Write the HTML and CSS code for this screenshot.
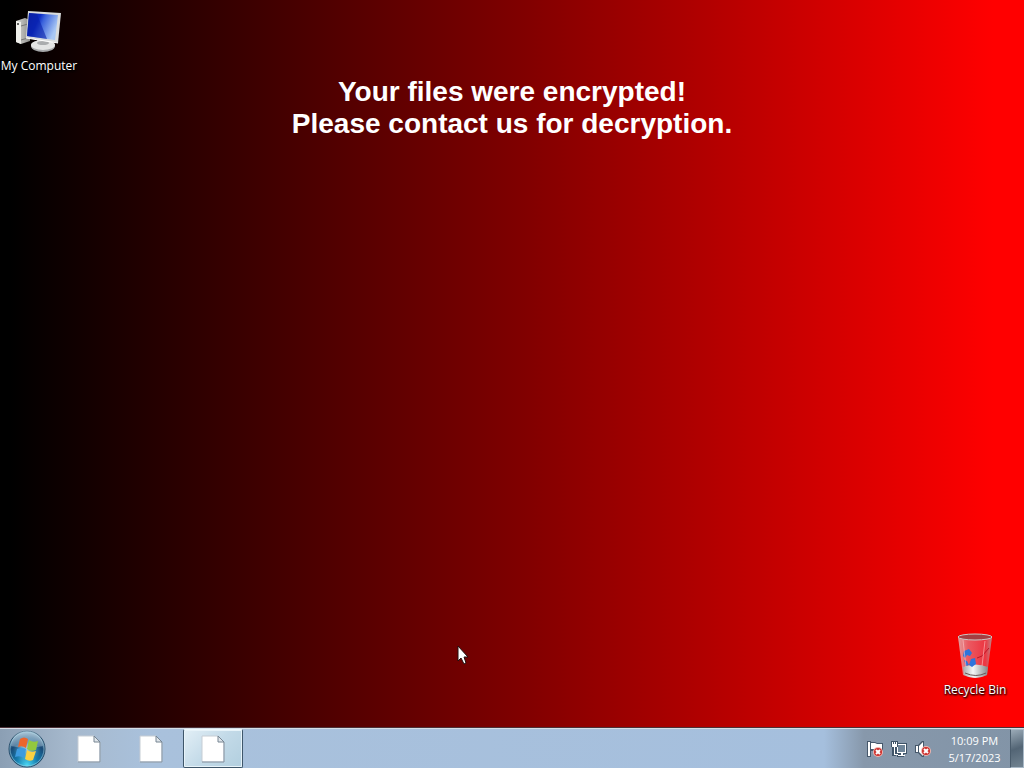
FILE: index.html
```
<!DOCTYPE html>
<html lang="en">
<head>
  <meta charset="UTF-8" />
  <meta name="viewport" content="width=device-width, initial-scale=1.0"/>
  <title>Desktop</title>
  <link rel="stylesheet" href="styles.css">
</head>
<body>
  <main class="desktop">
    <a class="shortcut computer" href="#computer">
      <svg width="48" height="48" viewBox="0 0 48 48" aria-hidden="true">
        <defs>
          <linearGradient id="screen" x1="0" y1="0" x2="1" y2="0.4">
            <stop offset="0" stop-color="#0a1f9c"/>
            <stop offset="0.4" stop-color="#0c2cc4"/>
            <stop offset="0.55" stop-color="#3a62dc"/>
            <stop offset="1" stop-color="#a9c8f4"/>
          </linearGradient>
          <linearGradient id="tower" x1="0" y1="0" x2="1" y2="0">
            <stop offset="0" stop-color="#d8d8d4"/>
            <stop offset="1" stop-color="#8d8d8b"/>
          </linearGradient>
        </defs>
        <path d="M1 13l9-3 5 2v21l-9 3-5-2z" fill="url(#tower)"/>
        <path d="M1 13l5 1v22l-5-2z" fill="#efefeb"/>
        <circle cx="3" cy="16" r="1" fill="#333"/>
        <path d="M6 18l7-2M6 32l7-2" stroke="#777" fill="none"/>
        <path d="M22 31l9 2v6h-9z" fill="#a5a7a8"/>
        <ellipse cx="28" cy="38" rx="12" ry="6" fill="#a6a8aa"/>
        <ellipse cx="28" cy="37" rx="12" ry="5" fill="#e3e4e4"/>
        <ellipse cx="28" cy="35" rx="6" ry="2" fill="#aaacae"/>
        <path d="M13 3l33 2-3 30-32-5z" fill="#d9dcdd"/>
        <path d="M14 5l29 2-3 25-28-4z" fill="url(#screen)"/>
        <path d="M14 5l8 1 10 25-20-3z" fill="#0820a8" opacity="0.6"/>
        <path d="M11 30l32 5" stroke="#fff"/>
      </svg>
      <span>My Computer</span>
    </a>

    <h1>Your files were encrypted!<br>Please contact us for decryption.</h1>

    <a class="shortcut bin" href="#bin">
      <svg width="48" height="48" viewBox="0 0 48 48" aria-hidden="true">
        <defs>
          <linearGradient id="glass" x1="0" y1="0" x2="1" y2="0">
            <stop offset="0" stop-color="#e0b0b0" stop-opacity="0.9"/>
            <stop offset="0.3" stop-color="#e8707a" stop-opacity="0.8"/>
            <stop offset="0.8" stop-color="#e84452" stop-opacity="0.8"/>
            <stop offset="1" stop-color="#b98a8a"/>
          </linearGradient>
          <linearGradient id="base" x1="0" y1="0" x2="1" y2="0">
            <stop offset="0" stop-color="#a7aaaa"/>
            <stop offset="0.4" stop-color="#f4f6f6"/>
            <stop offset="1" stop-color="#858888"/>
          </linearGradient>
        </defs>
        <path d="M7 5h34l-5 38q-12 6-24 0z" fill="url(#glass)"/>
        <path d="M12 35q12-5 25 0l-1 8q-12 6-23 0z" fill="url(#base)"/>
        <path d="M14 41q11 5 21 0" stroke="#6b5656" fill="none"/>
        <path d="M13 19l5-2 3 4-2 3-3-1-2 3-2-2zM20 27l4-1 1 6-4 3-3-2zM13 28l3 1 2 4-3 1z" fill="#2d74dc"/>
        <path d="M38 16l-7 8-5 2" stroke="#ba1727" fill="none"/>
        <path d="M12 8l3 27M34 9l-3 25" stroke="#ffc5c5" opacity="0.6"/>
        <ellipse cx="24" cy="5" rx="17" ry="3" fill="#a43e42" stroke="#ccc6c3"/>
      </svg>
      <span>Recycle Bin</span>
    </a>

    <svg class="pointer" width="12" height="20" viewBox="0 0 12 20" aria-hidden="true">
      <path d="M1 1v15l3-3 3 6 2-1-2-6h4z" fill="#fff" stroke="#201010"/>
    </svg>
  </main>

  <footer class="taskbar">
    <button class="start" type="button" aria-label="Start">
      <svg width="38" height="38" viewBox="0 0 38 38" aria-hidden="true">
        <defs>
          <radialGradient id="orb" cx="0.5" cy="0.95" r="0.9">
            <stop offset="0" stop-color="#4ad8f4"/>
            <stop offset="0.35" stop-color="#147aac"/>
            <stop offset="0.7" stop-color="#1a4a76"/>
            <stop offset="1" stop-color="#8fb0c6"/>
          </radialGradient>
          <radialGradient id="glow">
            <stop offset="0" stop-color="#dff6ff" stop-opacity="0.7"/>
            <stop offset="1" stop-color="#6ab7dc" stop-opacity="0"/>
          </radialGradient>
        </defs>
        <circle cx="19" cy="19" r="18" fill="url(#orb)" stroke="#264c69"/>
        <circle cx="19" cy="19" r="17" fill="none" stroke="#9fd0e2" opacity="0.6"/>
        <path d="M3 16a16 16 0 0 1 32 0q-16 4-32 0z" fill="#c9dfea" opacity="0.35"/>
        <circle cx="19" cy="19" r="14" fill="url(#glow)"/>
        <path d="M12 9q4-3 8 0l-2 9q-4-3-8-1z" fill="#ec652c"/>
        <path d="M21 10q4 3 9 1l-2 9q-5 2-9-1z" fill="#93c83f"/>
        <path d="M9 19q4-2 9 0l-2 9q-4-3-9-1z" fill="#3d9be0"/>
        <path d="M19 20q4 3 9 1l-3 9q-4 2-8-1z" fill="#fbd043"/>
      </svg>
    </button>

    <nav class="tasks" aria-label="Programs">
      <button type="button" aria-label="Program 1">
        <svg width="26" height="30" viewBox="0 0 26 30"><path d="M2 2h16l6 6v20H2z" fill="#fff" stroke="#c6cdd4"/><path d="M24 8v20H2" fill="none" stroke="#8293a3"/><path d="M18 2v6h6z" fill="#dfe5ea" stroke="#778592"/></svg>
      </button>
      <button type="button" aria-label="Program 2">
        <svg width="26" height="30" viewBox="0 0 26 30"><path d="M2 2h16l6 6v20H2z" fill="#fff" stroke="#c6cdd4"/><path d="M24 8v20H2" fill="none" stroke="#8293a3"/><path d="M18 2v6h6z" fill="#dfe5ea" stroke="#778592"/></svg>
      </button>
      <button class="active" type="button" aria-label="Program 3">
        <svg width="26" height="30" viewBox="0 0 26 30"><path d="M2 2h16l6 6v20H2z" fill="#fff" stroke="#c6cdd4"/><path d="M24 8v20H2" fill="none" stroke="#8293a3"/><path d="M18 2v6h6z" fill="#dfe5ea" stroke="#778592"/></svg>
      </button>
    </nav>

    <div class="tray">
      <button type="button" aria-label="Action Center">
        <svg width="16" height="16" viewBox="0 0 16 16">
          <path d="M0 0h4v1h4l2 1h6v8H4v6H0z" fill="#46586b"/>
          <path d="M1 1h2v14H1zM4 2h4l2 1h5v6H9L8 8H4z" fill="#fff"/>
          <circle cx="11" cy="11" r="5" fill="#f0b4ae"/>
          <circle cx="11" cy="11" r="4" fill="#cc2f2c"/>
          <path d="M9 9l4 4M13 9l-4 4" stroke="#fff" stroke-width="2"/>
        </svg>
      </button>
      <button type="button" aria-label="Network">
        <svg width="16" height="16" viewBox="0 0 16 16">
          <path d="M5 2h11v11h-3v3H6v-3H5z" fill="#3f5468"/>
          <path d="M6 3h9v9H6z" fill="#fff"/>
          <path d="M7 4h7v7H7z" fill="#70869a"/>
          <path d="M10 12h2v2h2v1H7v-1h3z" fill="#fff"/>
          <path d="M0 0h7v6H5v9H1V6H0z" fill="#3f5468"/>
          <path d="M1 1h1v2h1V1h1v2h1V1h1v5H4v7h3v1H3V6H1z" fill="#fff"/>
        </svg>
      </button>
      <button type="button" aria-label="Volume">
        <svg width="16" height="16" viewBox="0 0 16 16">
          <path d="M0 4h3l4-4h2v16H7l-4-4H0z" fill="#46586b"/>
          <path d="M1 5h2v6H1zM4 5l4-4v14l-4-4z" fill="#fff"/>
          <circle cx="11" cy="10" r="5" fill="#f0b4ae"/>
          <circle cx="11" cy="10" r="4" fill="#cc2f2c"/>
          <path d="M9 8l4 4M13 8l-4 4" stroke="#fff" stroke-width="2"/>
        </svg>
      </button>
      <button class="clock" type="button"><span>10:09 PM</span><span>5/17/2023</span></button>
    </div>
    <button class="peek" type="button" aria-label="Show desktop"></button>
  </footer>
</body>
</html>
```

FILE: styles.css
```
* {
  box-sizing: border-box;
}
body {
  margin: 0;
  min-height: 100vh;
  display: flex;
  flex-direction: column;
  font-family: 'Open Sans', 'Noto Sans', sans-serif;
  font-size: 12px;
  background: linear-gradient(to right, #000 1%, #800000 51%, #f00 97%);
}

.desktop {
  flex: 1;
  position: relative;
}

h1 {
  margin: 0;
  padding-top: 76px;
  font-family: 'Liberation Sans', Arial, sans-serif;
  font-size: 28px;
  line-height: 32px;
  text-align: center;
  color: #fff;
}

/* desktop icons */
.shortcut {
  position: absolute;
  width: 78px;
  display: flex;
  flex-direction: column;
  align-items: center;
  color: #fff;
  text-decoration: none;
  line-height: 16px;
  white-space: nowrap;
  text-shadow: 1px 1px 2px #000, 0 1px 2px #000;
}
.shortcut svg {
  margin-bottom: 2px;
}
.computer {
  left: 0;
  top: 8px;
}
.bin {
  right: 10px;
  bottom: 30px;
}
.pointer {
  position: absolute;
  left: 457px;
  top: 645px;
}

button {
  display: flex;
  align-items: center;
  justify-content: center;
  margin: 0;
  padding: 0;
  border: none;
  background: none;
  font: inherit;
  color: inherit;
}

/* taskbar */
.taskbar {
  display: flex;
  height: 40px;
  border-top: 1px solid #d5dde6;
  background: linear-gradient(to right, #8b9fb4 0, #a6b9cd 70px, #a9c1dc 150px, #a5bfdd calc(100% - 200px), #8798ab calc(100% - 160px), #8294a7 100%);
  box-shadow: 0 -1px 0 #4b3138;
}
.start {
  width: 54px;
}
.tasks {
  display: flex;
  gap: 2px;
  margin-left: 5px;
}
.tasks button {
  width: 60px;
}
.tasks .active {
  border: 1px solid #3e566a;
  border-top-color: #edf7fc;
  border-radius: 2px;
  background: linear-gradient(135deg, #e2eff6, #c3dae8 50%, #b2cfdf);
  box-shadow: inset 0 0 0 1px #e7f3f9;
}

.tray {
  display: flex;
  gap: 8px;
  margin-left: auto;
  color: #fff;
}
.tray svg {
  display: block;
}
.clock {
  flex-direction: column;
  width: 71px;
  font-size: 11px;
  line-height: 17px;
}
.peek {
  width: 14px;
  border: 1px solid #a9b9c7;
  border-left-color: #495b6b;
  background: linear-gradient(160deg, #9aaab7, #536575 50%, #718391);
}
```
